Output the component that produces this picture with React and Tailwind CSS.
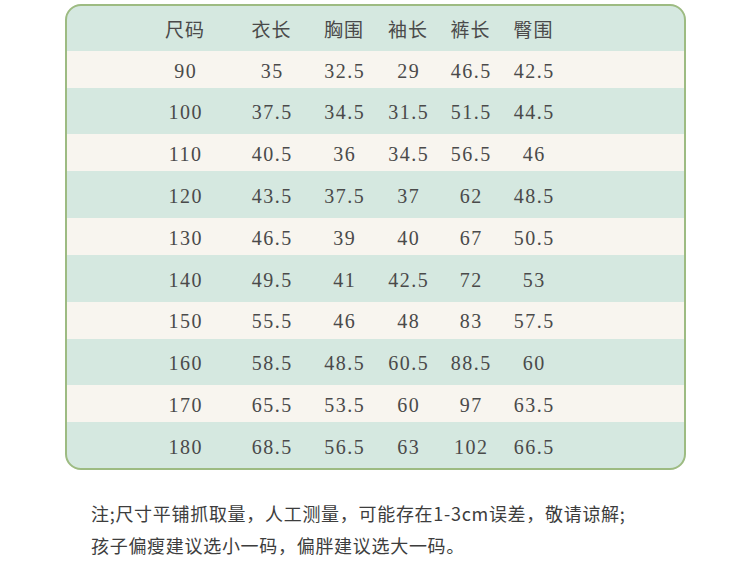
import React from "react";

const HEAD = ["尺码", "衣长", "胸围", "袖长", "裤长", "臀围"];

const ROWS = [
  ["90", "35", "32.5", "29", "46.5", "42.5"],
  ["100", "37.5", "34.5", "31.5", "51.5", "44.5"],
  ["110", "40.5", "36", "34.5", "56.5", "46"],
  ["120", "43.5", "37.5", "37", "62", "48.5"],
  ["130", "46.5", "39", "40", "67", "50.5"],
  ["140", "49.5", "41", "42.5", "72", "53"],
  ["150", "55.5", "46", "48", "83", "57.5"],
  ["160", "58.5", "48.5", "60.5", "88.5", "60"],
  ["170", "65.5", "53.5", "60", "97", "63.5"],
  ["180", "68.5", "56.5", "63", "102", "66.5"],
];

const cjk = { fontFamily: '"Noto Sans CJK SC", sans-serif' };
const serif = { fontFamily: '"Liberation Serif", serif' };

export default function App() {
  return (
    <div className="w-[750px] h-[581px] bg-white overflow-hidden pt-[4px]">
      <div className="mx-auto w-[621px] border-2 border-[#9dbb82] rounded-[16px] bg-[#d5e8e0] pt-[2px] overflow-hidden">
        <div
          className="h-[41.8px] pl-[72px] grid grid-cols-[93px_80px_65px_63px_62px_64px] items-center justify-items-center text-[19px] tracking-[1px] text-[#4a4a4a]"
          style={cjk}
        >
          {HEAD.map((h) => (
            <span key={h}>{h}</span>
          ))}
        </div>
        {ROWS.map((row, i) => (
          <div
            key={row[0]}
            className={`h-[41.8px] pl-[72px] grid grid-cols-[93px_80px_65px_63px_62px_64px] items-center justify-items-center text-[20px] tracking-[1.5px] text-[#4a4a4a] ${
              i % 2 === 0
                ? "bg-[linear-gradient(to_bottom,transparent_0,transparent_1px,#f8f5ef_1px,#f8f5ef_38px,transparent_38px)]"
                : ""
            }`}
            style={serif}
          >
            {row.map((v, j) => (
              <span key={j} className="pl-[1.5px]">
                {v}
              </span>
            ))}
          </div>
        ))}
      </div>
      <div
        className="pl-[91px] pt-[27px] text-[18px] leading-[32px] tracking-[0.7px] text-[#3d3d3d]"
        style={cjk}
      >
        <p>注;尺寸平铺抓取量，人工测量，可能存在1-3cm误差，敬请谅解;</p>
        <p>孩子偏瘦建议选小一码，偏胖建议选大一码。</p>
      </div>
    </div>
  );
}
